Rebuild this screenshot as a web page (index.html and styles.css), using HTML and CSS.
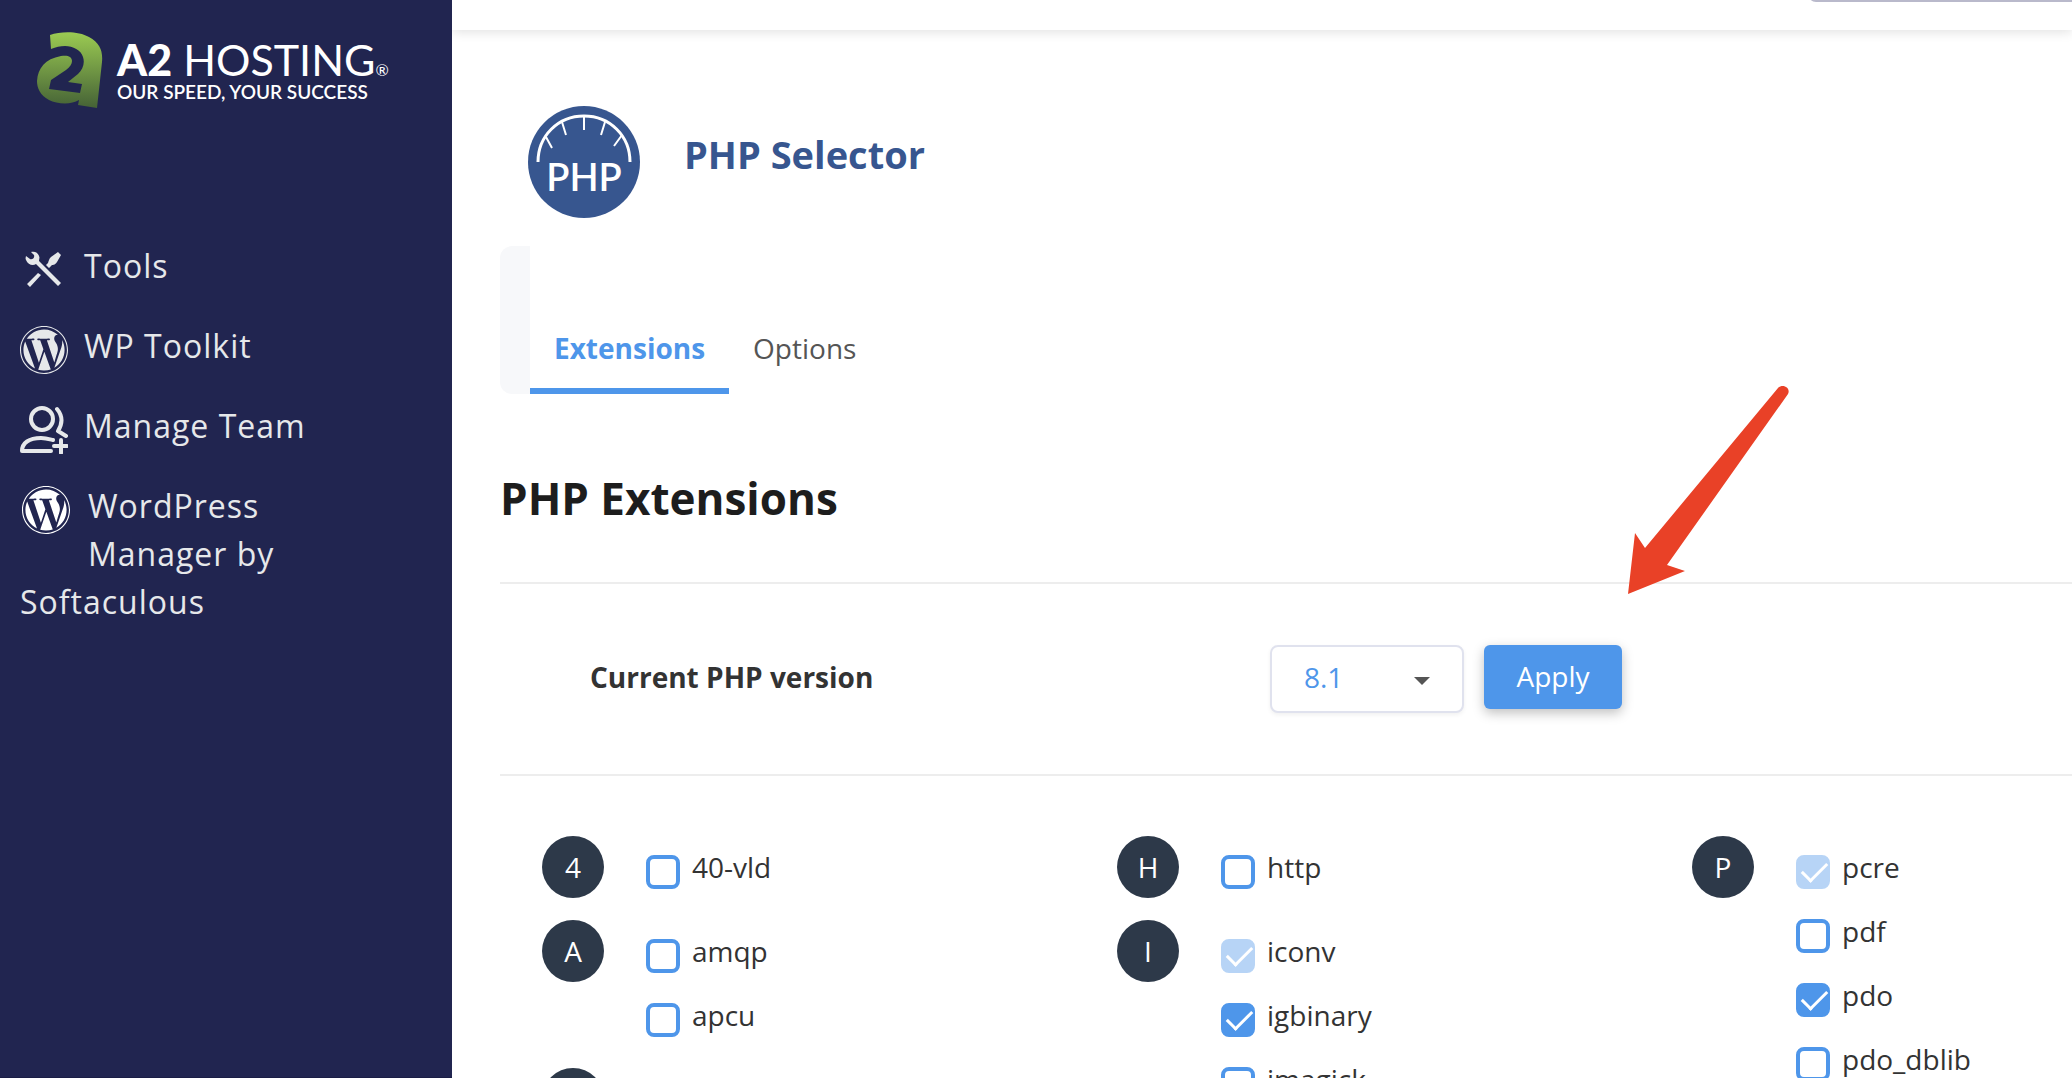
FILE: index.html
```
<!DOCTYPE html>
<html lang="en">
<head>
    <meta charset="UTF-8">
    <meta name="viewport" content="width=device-width, initial-scale=1.0">
    <title>PHP Selector</title>
    <link rel="stylesheet" href="styles.css">
</head>
<body>
    <svg class="defs" width="0" height="0" aria-hidden="true">
        <symbol id="wordpress" viewBox="8 8 496 496">
            <path d="M61.7 169.4l101.5 278C92.2 413 43.3 340.2 43.3 256c0-30.9 6.6-60.1 18.4-86.6zm337.9 75.9c0-26.3-9.4-44.5-17.5-58.7-10.8-17.5-20.9-32.4-20.9-49.9 0-19.6 14.8-37.8 35.7-37.8.9 0 1.8.1 2.8.2-37.9-34.7-88.3-55.9-143.7-55.9-74.3 0-139.7 38.1-177.8 95.9 5 .2 9.7.3 13.7.3 22.2 0 56.7-2.7 56.7-2.7 11.5-.7 12.8 16.2 1.4 17.5 0 0-11.5 1.3-24.3 2l77.5 230.4L249.8 247l-33.1-90.8c-11.5-.7-22.3-2-22.3-2-11.5-.7-10.1-18.2 1.3-17.5 0 0 35.1 2.7 56 2.7 22.2 0 56.7-2.7 56.7-2.7 11.5-.7 12.8 16.2 1.4 17.5 0 0-11.5 1.3-24.3 2l76.9 228.7 21.2-70.9c9-29.4 16-50.5 16-68.7zm-139.9 29.3l-63.8 185.5c19.1 5.6 39.2 8.7 60.1 8.7 24.8 0 48.5-4.3 70.6-12.1-.6-.9-1.1-1.9-1.5-2.9l-65.4-179.2zm183-120.7c.9 6.8 1.4 14 1.4 21.9 0 21.6-4 45.8-16.2 76.2l-65 187.9C426.2 403 468.7 334.5 468.7 256c0-37-9.4-71.8-26-102.1zM504 256c0 136.8-111.3 248-248 248C119.2 504 8 392.7 8 256 8 119.2 119.2 8 256 8c136.7 0 248 111.2 248 248zm-11.4 0c0-130.5-106.2-236.6-236.6-236.6C125.5 19.4 19.4 125.5 19.4 256S125.6 492.6 256 492.6c130.5 0 236.6-106.1 236.6-236.6z"/>
        </symbol>
    </svg>

    <aside class="sidebar">
        <a class="logo" href="#">
            <svg class="logo-mark" viewBox="0 0 66 76" aria-hidden="true">
                <defs>
                    <linearGradient id="logoGreen" x1="0" y1="0" x2="0" y2="1">
                        <stop offset="0" stop-color="#9bcb52"/>
                        <stop offset="1" stop-color="#456236"/>
                    </linearGradient>
                </defs>
                <path fill="url(#logoGreen)" d="M13 3C24-1 42-1 52 5c11 6 14 14 13 25L60 76 41 73 42 68C34 73 20 72 12 68 3 63 0 56 0 49 1 36 8 27 24 24 30 23 35 24 35 29 35 32 33 35 29 38L14 48 12 57 43 61 45 52 31 50 41 42C46 37 48 31 46 25 44 18 36 14 28 14 23 14 19 15 14 17Z"/>
            </svg>
            <span class="logo-text">
                <span class="logo-name"><b>A2</b> HOSTING<small>®</small></span>
                <span class="logo-tagline">OUR SPEED, YOUR SUCCESS</span>
            </span>
        </a>
        <nav class="side-nav">
            <a href="#">
                <svg viewBox="0 0 48 48" aria-hidden="true">
                    <path d="M11 6c3-1 7 0 8 4 1 2 0 3 0 5l22 22-3 3-22-22c-3 2-8 1-10-4-1-2 0-3 0-4l4 3c2 1 5-1 4-4zM28 17c1-3 1-4 3-6l7-5 3 3-4 7c-2 3-4 3-5 3l-3 3-3-3zM18 27l3 2-11 12-3-3z"/>
                </svg>
                <span>Tools</span>
            </a>
            <a href="#"><svg viewBox="0 0 48 48" aria-hidden="true"><use href="#wordpress"/></svg><span>WP Toolkit</span></a>
            <a href="#">
                <svg class="line-icon" viewBox="0 0 48 48" aria-hidden="true">
                    <circle cx="22" cy="13" r="11"/>
                    <path d="M31 45H2C2 37 9 32 21 32c5 0 8 1 12 2M37 3c5 6 6 14 1 22l8 5M41 34v13M34 40h13"/>
                </svg>
                <span>Manage Team</span>
            </a>
            <a class="wrapped" href="#"><svg viewBox="0 0 48 48" aria-hidden="true"><use href="#wordpress"/></svg>WordPress<br>Manager by<br>Softaculous</a>
        </nav>
    </aside>

    <div class="page">
        <header class="topbar">
            <input type="search" class="search" aria-label="Search">
        </header>

        <main class="content">
            <div class="page-title">
                <svg viewBox="0 0 112 112" aria-hidden="true">
                    <circle cx="56" cy="56" r="56" fill="#37568f"/>
                    <path d="M10 56C10 30 30 10 56 10s46 20 46 46" fill="none" stroke="#fff" stroke-width="3"/>
                    <path d="M56 10v14M34 16l4 13M77 16l-4 13M18 31l6 11M94 29l-8 11" fill="none" stroke="#fff" stroke-width="2"/>
                    <text x="56" y="85" text-anchor="middle">PHP</text>
                </svg>
                <h1>PHP Selector</h1>
            </div>

            <div class="tabs">
                <a class="active" href="#">Extensions</a>
                <a href="#">Options</a>
            </div>

            <h2>PHP Extensions</h2>

            <form class="version-form">
                <label for="version">Current PHP version</label>
                <div class="version-controls">
                    <div class="select-wrap">
                        <select id="version">
                            <option>8.1</option>
                        </select>
                    </div>
                    <button type="button">Apply</button>
                </div>
                <svg class="arrow" viewBox="0 0 162 212" aria-hidden="true">
                    <path d="M0 210L7 149 17 164 150 4C155-1 163 4 160 10L39 181 57 187Z"/>
                </svg>
            </form>

            <div class="extensions">
                <div class="column">
                    <section class="group">
                        <span class="letter">4</span>
                        <div class="items">
                            <label><input type="checkbox">40-vld</label>
                        </div>
                    </section>
                    <section class="group">
                        <span class="letter">A</span>
                        <div class="items">
                            <label><input type="checkbox">amqp</label>
                            <label><input type="checkbox">apcu</label>
                        </div>
                    </section>
                    <section class="group">
                        <span class="letter"></span>
                    </section>
                </div>
                <div class="column">
                    <section class="group">
                        <span class="letter">H</span>
                        <div class="items">
                            <label><input type="checkbox">http</label>
                        </div>
                    </section>
                    <section class="group">
                        <span class="letter">I</span>
                        <div class="items">
                            <label><input type="checkbox" checked disabled>iconv</label>
                            <label><input type="checkbox" checked>igbinary</label>
                            <label><input type="checkbox">imagick</label>
                        </div>
                    </section>
                </div>
                <div class="column">
                    <section class="group">
                        <span class="letter">P</span>
                        <div class="items">
                            <label><input type="checkbox" checked disabled>pcre</label>
                            <label><input type="checkbox">pdf</label>
                            <label><input type="checkbox" checked>pdo</label>
                            <label><input type="checkbox">pdo_dblib</label>
                        </div>
                    </section>
                </div>
            </div>
        </main>
    </div>
</body>
</html>
```
FILE: styles.css
```
:root {
    --navy: #212550;
    --blue: #4e96ea;
    --brand: #37568f;
    --text: #333;
    --line: #ededed;
}
* { box-sizing: border-box; }
body { margin: 0; height: 100vh; display: flex; overflow: hidden; background: #fff; color: var(--text); font: 28px/40px "Open Sans", "Noto Sans", sans-serif; }
a { color: inherit; text-decoration: none; }
.defs { position: absolute; }

/* Sidebar */
.sidebar { flex: 0 0 452px; padding: 32px 20px; background: var(--navy); color: #e6e8ea; border-bottom: 1px solid #1a1d45; }
.logo { display: flex; gap: 14px; margin-left: 17px; color: #fff; }
.logo-mark { width: 66px; height: 76px; }
.logo-text { display: flex; flex-direction: column; white-space: nowrap; }
.logo-name { height: 50px; font: 43px/56px Lato, sans-serif; }
.logo-name b { font-weight: 900; }
.logo-name small { font-size: 16px; }
.logo-tagline { font: 600 19px/20px Lato, sans-serif; }
.side-nav { margin-top: 134px; font-size: 32px; line-height: 48px; letter-spacing: 1px; }
.side-nav a { display: flex; gap: 16px; height: 48px; margin-bottom: 32px; }
.side-nav svg { flex: none; width: 48px; height: 48px; margin-top: 4px; fill: currentColor; }
.side-nav .line-icon { fill: none; stroke: currentColor; stroke-width: 4; stroke-linecap: round; stroke-linejoin: round; }
.side-nav .wrapped { display: block; height: auto; }
.side-nav .wrapped svg { float: left; margin: 4px 18px 0 2px; color: #fff; }

/* Top bar */
.page { flex: 1; min-width: 0; overflow: hidden; }
.topbar { height: 30px; display: flex; justify-content: flex-end; align-items: flex-start; box-shadow: 0 2px 12px rgba(0,0,0,0.12); }
.search { width: 264px; height: 56px; margin-top: -54px; border: 2px solid #b9b9cb; border-right: 0; border-radius: 8px 0 0 8px; }

/* Content */
.content { padding: 76px 0 0 48px; }
.page-title { display: flex; gap: 44px; margin-left: 28px; }
.page-title svg { width: 112px; height: 112px; }
.page-title text { fill: #fff; font: 600 38px Lato, sans-serif; }
h1 { margin: 22px 0 0; font-size: 38px; line-height: 52px; color: var(--brand); }
.tabs { display: flex; align-items: flex-end; height: 148px; margin-top: 28px; border-left: 30px solid #f7f8fa; border-radius: 12px 0 0 12px; }
.tabs a { padding: 0 24px 20px; border-bottom: 6px solid transparent; color: #555; }
.tabs .active { color: var(--blue); font-weight: 700; border-color: var(--blue); }
h2 { margin: 72px 0 52px; font-size: 44px; line-height: 64px; color: #1d1d1d; }

.version-form { display: flex; align-items: center; position: relative; height: 194px; border-top: 2px solid var(--line); border-bottom: 2px solid var(--line); }
.version-form label { flex: 0 0 680px; padding: 0 0 4px 90px; font-weight: 700; }
.version-controls { display: flex; gap: 20px; margin-left: 90px; }
.select-wrap { position: relative; }
.select-wrap::after { content: ""; position: absolute; right: 34px; top: 32px; border: 8px solid transparent; border-top-color: #555; border-bottom: 0; pointer-events: none; }
select { appearance: none; width: 194px; height: 68px; padding: 0 32px 4px; border: 2px solid #e0e2ee; border-radius: 8px; background: #fff; color: var(--blue); font: inherit; box-shadow: 0 2px 4px rgba(0,0,0,0.06); }
button { width: 138px; height: 64px; padding: 0 0 2px; border: 0; border-radius: 6px; background: var(--blue); color: #fff; font: inherit; box-shadow: 0 4px 12px rgba(0,0,0,0.25); }
.arrow { position: absolute; left: 1128px; bottom: 178px; width: 162px; height: 212px; fill: #e94127; }

/* Extensions list */
.extensions { display: grid; grid-template-columns: repeat(3, 575px); margin-left: 42px; padding-top: 60px; }
.group { display: flex; gap: 42px; padding-bottom: 20px; }
.letter { flex: none; width: 62px; height: 62px; border-radius: 50%; background: #2d3949; color: #fff; text-align: center; line-height: 62px; }
.items label { display: flex; gap: 12px; height: 64px; padding-top: 11px; }
input[type="checkbox"] { appearance: none; flex: none; width: 34px; height: 34px; margin: 8px 0 0; border: 4px solid var(--blue); border-radius: 8px; }
input[type="checkbox"]:checked { background: var(--blue); }
input[type="checkbox"]:checked::after { content: ""; display: block; width: 22px; height: 11px; margin: 3px 0 0 2px; border: solid #fff; border-width: 0 0 3px 3px; transform: rotate(-45deg); }
input[type="checkbox"]:disabled { opacity: 0.4; }
```
